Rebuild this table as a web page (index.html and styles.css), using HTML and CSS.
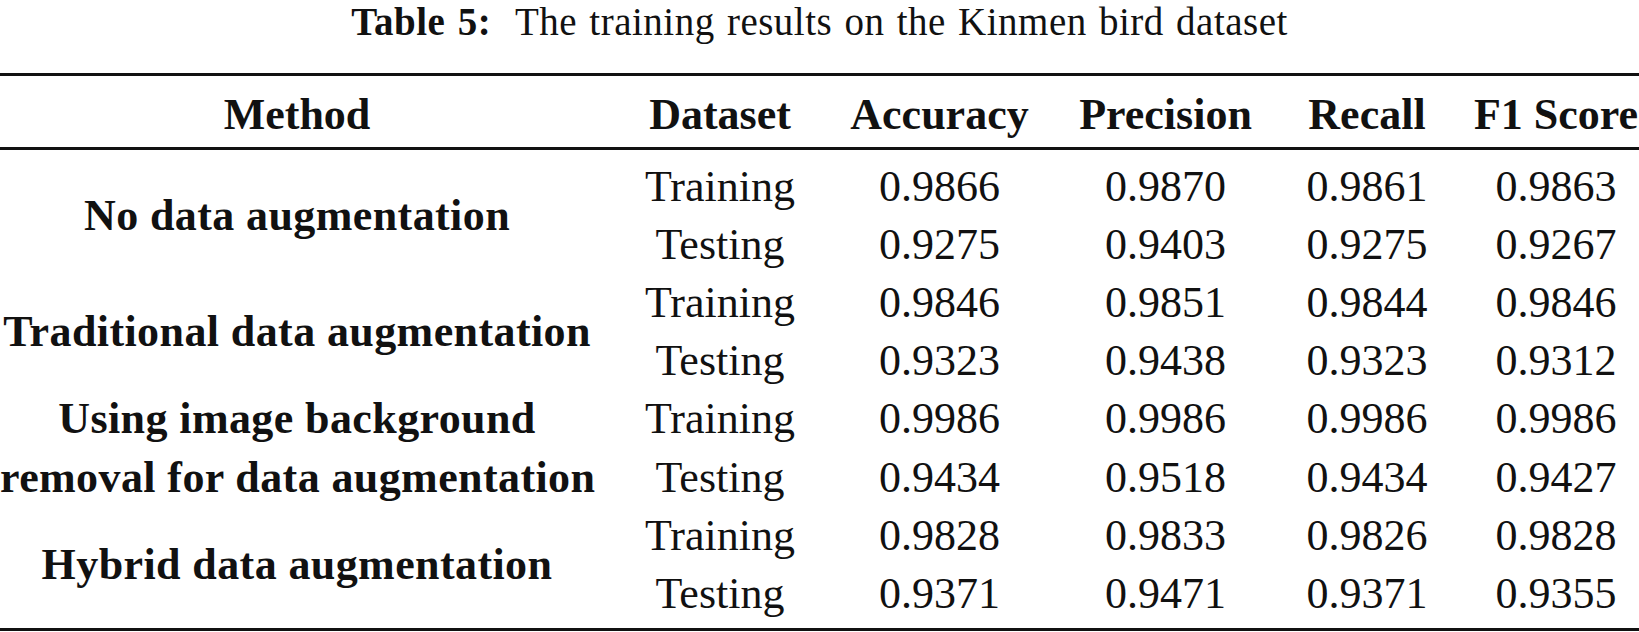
FILE: index.html
```html
<!DOCTYPE html>
<html lang="en">
<head>
<meta charset="utf-8">
<title>Table 5</title>
<link rel="stylesheet" href="styles.css">
</head>
<body>
<div class="page">
  <p class="caption"><span class="label">Table 5:</span>&nbsp; The training results on the Kinmen bird dataset</p>
  <div class="table">
    <div class="head">
      <div class="c c1 b">Method</div>
      <div class="c c2 b">Dataset</div>
      <div class="c c3 b">Accuracy</div>
      <div class="c c4 b">Precision</div>
      <div class="c c5 b">Recall</div>
      <div class="c c6 b">F1 Score</div>
    </div>
    <div class="body">
      <div class="c c1 b method">No data augmentation</div>
      <div class="c c2">Training</div><div class="c c3">0.9866</div><div class="c c4">0.9870</div><div class="c c5">0.9861</div><div class="c c6">0.9863</div>
      <div class="c c2">Testing</div><div class="c c3">0.9275</div><div class="c c4">0.9403</div><div class="c c5">0.9275</div><div class="c c6">0.9267</div>

      <div class="c c1 b method">Traditional data augmentation</div>
      <div class="c c2">Training</div><div class="c c3">0.9846</div><div class="c c4">0.9851</div><div class="c c5">0.9844</div><div class="c c6">0.9846</div>
      <div class="c c2">Testing</div><div class="c c3">0.9323</div><div class="c c4">0.9438</div><div class="c c5">0.9323</div><div class="c c6">0.9312</div>

      <div class="c c1 b method">Using image background<br>removal for data augmentation</div>
      <div class="c c2">Training</div><div class="c c3">0.9986</div><div class="c c4">0.9986</div><div class="c c5">0.9986</div><div class="c c6">0.9986</div>
      <div class="c c2">Testing</div><div class="c c3">0.9434</div><div class="c c4">0.9518</div><div class="c c5">0.9434</div><div class="c c6">0.9427</div>

      <div class="c c1 b method">Hybrid data augmentation</div>
      <div class="c c2">Training</div><div class="c c3">0.9828</div><div class="c c4">0.9833</div><div class="c c5">0.9826</div><div class="c c6">0.9828</div>
      <div class="c c2">Testing</div><div class="c c3">0.9371</div><div class="c c4">0.9471</div><div class="c c5">0.9371</div><div class="c c6">0.9355</div>
    </div>
  </div>
</div>
</body>
</html>
```

FILE: styles.css
```css
html, body {
  margin: 0;
  padding: 0;
  background: #fff;
}
body {
  font-family: "Liberation Serif", "Times New Roman", serif;
  color: #111;
}
.page {
  width: 1639px;
}
.caption {
  margin: 0;
  font-size: 39px;
  line-height: 43px;
  letter-spacing: 0.5px;
  word-spacing: 2px;
  text-align: center;
}
.caption .label {
  font-weight: bold;
}
.table {
  margin-top: 30px;
  border-top: 3px solid #111;
  border-bottom: 3px solid #111;
  font-size: 44px;
}
.head,
.body {
  display: grid;
  grid-template-columns: 614px 212px 227px 225px 168px 193px;
  grid-auto-rows: 58.1px;
}
.head {
  padding: 10px 0 3px;
  border-bottom: 3px solid #111;
}
.body {
  padding: 8px 0 5px;
  grid-auto-flow: row dense;
}
.c {
  line-height: 58.1px;
  text-align: center;
  white-space: nowrap;
}
.b {
  font-weight: bold;
}
.c1 {
  grid-column: 1;
  padding-right: 20px;
}
.c2 { grid-column: 2; }
.c3 { grid-column: 3; }
.c4 { grid-column: 4; }
.c5 { grid-column: 5; padding-left: 10px; }
.c6 { grid-column: 6; padding-left: 27px; }
.method {
  grid-row: span 2;
  align-self: center;
  letter-spacing: 0.4px;
}
```
